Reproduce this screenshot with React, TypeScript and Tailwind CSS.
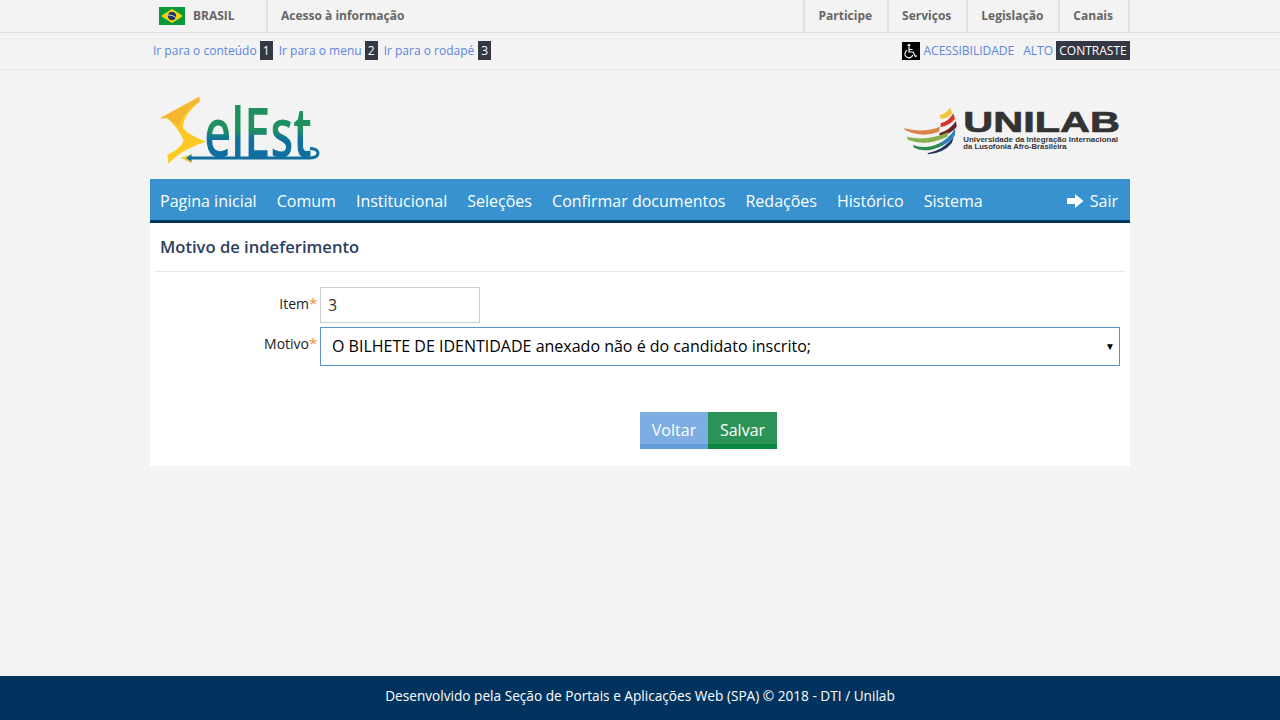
const font = { fontFamily: '"Open Sans", sans-serif' };

const navItems = ["Pagina inicial", "Comum", "Institucional", "Seleções", "Confirmar documentos", "Redações", "Histórico", "Sistema"];
const topLinks = ["Participe", "Serviços", "Legislação", "Canais"];
const skipLinks = [
  { label: "Ir para o conteúdo", key: "1" },
  { label: "Ir para o menu", key: "2" },
  { label: "Ir para o rodapé", key: "3" },
];

function BrazilFlag() {
  return (
    <svg width="26" height="18" viewBox="0 0 26 18">
      <rect width="26" height="18" fill="#0a9a3c" />
      <polygon points="13,2 24,9 13,16 2,9" fill="#f5d90a" />
      <circle cx="13" cy="9" r="4.2" fill="#20306f" />
      <path d="M9 8 Q13 7.5 17 10.5" stroke="#fff" strokeWidth="0.8" fill="none" />
    </svg>
  );
}

function WheelchairIcon() {
  return (
    <svg width="18" height="18" viewBox="0 0 18 18" className="bg-black">
      <circle cx="7" cy="3.2" r="1.3" fill="#fff" />
      <path d="M7 5v5h4l2.5 4.500 1.500-.7M7 7.500h3.500" stroke="#fff" strokeWidth="1.2" fill="none" />
      <path d="M5.200 8.200a4 4 0 1 0 5.600 4.600" stroke="#fff" strokeWidth="1.100" fill="none" />
    </svg>
  );
}

// drawn on a 3x grid, so the numbers read straight off a zoomed crop
function SelEstLogo() {
  return (
    <svg width="190" height="90" viewBox="0 0 570 270">
      <defs>
        <linearGradient id="selest" x1="0" y1="70" x2="0" y2="215" gradientUnits="userSpaceOnUse">
          <stop offset="0.45" stopColor="#1f9160" />
          <stop offset="0.65" stopColor="#0f6f9f" />
        </linearGradient>
      </defs>
      <path d="M30 100L148 35V50Q95 95 100 130Q115 150 168 170Q90 195 55 237L52 210Q100 185 100 165Q85 130 52 100Z" fill="#fdc925" />
      <path d="M30 100L148 35V50Q95 80 88 125L52 100Z" fill="#f5b731" />
      <polygon points="92,218 125,208 125,235" fill="#fdc925" />
      <text x="163" y="215" fontFamily='"Open Sans", sans-serif' fontWeight="600" fontSize="206" textLength="322" lengthAdjust="spacingAndGlyphs" fill="url(#selest)">elEst</text>
      <path d="M118 219H480Q505 218 504 203Q502 192 480 190" stroke="#0f6f9f" strokeWidth="9" fill="none" />
      <polygon points="108,219 124,208 124,230" fill="#0f6f9f" />
    </svg>
  );
}

function UnilabLogo() {
  return (
    <svg width="240" height="70" viewBox="0 0 720 210">
      <path d="M42 100Q100 115 150 95L147 110Q95 130 45 105Z" fill="#d9854a" />
      <path d="M150 60Q170 55 180 38L187 55Q175 70 152 72Z" fill="#f2c43a" />
      <path d="M152 85Q175 80 190 55L195 72Q180 90 152 97Z" fill="#d8352f" />
      <path d="M148 115Q180 105 198 78L200 95Q185 115 150 125Z" fill="#6c2226" />
      <path d="M50 125Q110 140 175 112L172 125Q110 155 55 135Z" fill="#86b04a" />
      <path d="M138 150Q175 135 196 100L195 120Q175 150 135 160Z" fill="#2f7fb8" />
      <path d="M68 150Q110 165 160 140L150 155Q105 175 72 158Z" fill="#2e8a4c" />
      <path d="M112 175Q160 165 192 125L185 145Q160 175 115 178Z" fill="#23345f" />
      <g fontFamily='"Liberation Sans", sans-serif' fill="#333333">
        <text x="220" y="112" fontSize="87" fontWeight="700" stroke="#333333" strokeWidth="2" textLength="470" lengthAdjust="spacingAndGlyphs">UNILAB</text>
        <text x="220" y="140" fontSize="20" fontWeight="700" textLength="464" lengthAdjust="spacingAndGlyphs">Universidade da Integração Internacional</text>
        <text x="220" y="163" fontSize="20" fontWeight="700" textLength="310" lengthAdjust="spacingAndGlyphs">da Lusofonia Afro-Brasileira</text>
      </g>
    </svg>
  );
}

export default function App() {
  return (
    <div className="min-h-screen flex flex-col bg-[#f3f3f3]" style={font}>
      <div className="h-[33px] border-b border-[#dfdfdf] shrink-0">
        <div className="w-[980px] mx-auto flex items-stretch h-[32px] text-[12px] font-bold text-[#666666]">
          <div className="w-[118px] flex items-center pl-[9px] gap-[8px] border-r-2 border-[#dfdfdf]">
            <BrazilFlag />
            <span>BRASIL</span>
          </div>
          <div className="flex items-center pl-[13px] flex-1">Acesso à informação</div>
          {topLinks.map((l) => (
            <div key={l} className="flex items-center pl-[13px] pr-[15px] border-l-2 border-[#dfdfdf]">{l}</div>
          ))}
          <div className="border-l-2 border-[#dfdfdf]" />
        </div>
      </div>

      <div className="h-[37px] border-b border-dotted border-[#dfdfdf] shrink-0">
        <div className="w-[980px] mx-auto flex items-center justify-between h-[36px] pb-[1px] text-[12px] text-[#5c85e0]">
          <div className="flex items-center pl-[3px]">
            {skipLinks.map((s) => (
              <div key={s.key} className="flex items-center mr-[6px]">
                <span>{s.label}</span>
                <span className={s.key === "3" ? "ml-[4px] w-[13px] h-[19px] bg-[#333844] text-white flex items-center justify-center" : "ml-[3px] w-[13px] h-[19px] bg-[#333844] text-white flex items-center justify-center"}>{s.key}</span>
              </div>
            ))}
          </div>
          <div className="flex items-center">
            <WheelchairIcon />
            <span className="ml-[3px]">ACESSIBILIDADE</span>
            <span className="ml-[9px]">ALTO</span>
            <span className="ml-[3px] h-[19px] w-[74px] bg-[#333844] text-white flex items-center justify-center">CONTRASTE</span>
          </div>
        </div>
      </div>

      <div className="w-[980px] mx-auto">
        <div className="h-[109px] flex items-start justify-between">
          <div className="mt-[15px]"><SelEstLogo /></div>
          <div className="mt-[25px]"><UnilabLogo /></div>
        </div>

        <div className="h-[44px] bg-[#3792cf] border-b-[3px] border-[#00375f] flex items-center justify-between pl-[10px] pr-[12px] pt-[3px] text-white text-[16px]">
          <div className="flex items-center gap-[20.100px]">
            {navItems.map((n) => (
              <span key={n}>{n}</span>
            ))}
          </div>
          <div className="flex items-center gap-[6px]">
            <svg width="17" height="16" viewBox="0 0 17 16">
              <path d="M0 5h8V1l8.500 7-8.500 7v-4H0z" fill="#fff" />
            </svg>
            <span>Sair</span>
          </div>
        </div>

        <div className="bg-white h-[243px] flex flex-col">
          <div className="mx-[5px] h-[49px] border-b border-[#e8e8e8] pl-[5px] flex items-center text-[16.600px] font-semibold text-[#2c3e5e]">
            Motivo de indeferimento
          </div>
          <div className="flex items-start mt-[15px]">
            <div className="w-[170px] pr-[4px] pt-[1px] text-right text-[14px] text-[#222222] leading-[32px]">
              Item<span className="inline-block w-[7px] text-left text-[#f58a3c] text-[15px] leading-none">*</span>
            </div>
            <div className="w-[160px] h-[36px] border border-[#cccccc] pl-[7px] flex items-center text-[16px] text-[#333333]">3</div>
          </div>
          <div className="flex items-start mt-[4px]">
            <div className="w-[170px] pr-[4px] pt-[1px] text-right text-[14px] text-[#222222] leading-[32px]">
              Motivo<span className="inline-block w-[7px] text-left text-[#f58a3c] text-[15px] leading-none">*</span>
            </div>
            <div className="w-[800px] h-[39px] border border-[#5b8fcf] pl-[11px] pr-[4px] pb-[2px] flex items-center justify-between text-[16px] text-black">
              <span>O BILHETE DE IDENTIDADE anexado não é do candidato inscrito;</span>
              <span className="text-[10px] pt-[2px]">▼</span>
            </div>
          </div>
          <div className="flex mt-[46px] pl-[490px] text-white text-[16px]">
            <div className="h-[37px] w-[68px] bg-[#7dade3] border-b-[5px] border-[#639bdb] pt-[3px] flex items-center justify-center">Voltar</div>
            <div className="h-[37px] w-[69px] bg-[#2c9357] border-b-[5px] border-[#0b873f] pt-[3px] flex items-center justify-center">Salvar</div>
          </div>
        </div>
      </div>

      <div className="mt-auto h-[44px] bg-[#00345f] text-white text-[13.650px] pb-[3px] flex items-center justify-center shrink-0">
        Desenvolvido pela Seção de Portais e Aplicações Web (SPA) © 2018 - DTI / Unilab
      </div>
    </div>
  );
}
